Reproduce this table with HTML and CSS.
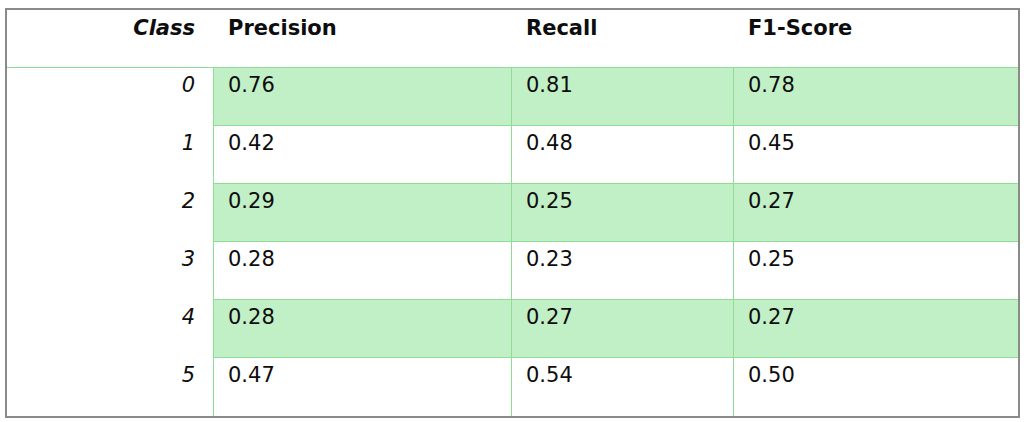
FILE: index.html
```html
<!DOCTYPE html>
<html lang="en">
<head>
<meta charset="utf-8">
<title>Classification report</title>
<link rel="stylesheet" href="styles.css">
</head>
<body>
<div class="page">
  <div class="report" role="table">
    <div class="cell head cls" role="columnheader">Class</div>
    <div class="cell head" role="columnheader">Precision</div>
    <div class="cell head" role="columnheader">Recall</div>
    <div class="cell head" role="columnheader">F1-Score</div>

    <div class="cell cls">0</div>
    <div class="cell num band">0.76</div>
    <div class="cell num band">0.81</div>
    <div class="cell num band">0.78</div>

    <div class="cell cls">1</div>
    <div class="cell num">0.42</div>
    <div class="cell num">0.48</div>
    <div class="cell num">0.45</div>

    <div class="cell cls">2</div>
    <div class="cell num band">0.29</div>
    <div class="cell num band">0.25</div>
    <div class="cell num band">0.27</div>

    <div class="cell cls">3</div>
    <div class="cell num">0.28</div>
    <div class="cell num">0.23</div>
    <div class="cell num">0.25</div>

    <div class="cell cls">4</div>
    <div class="cell num band">0.28</div>
    <div class="cell num band">0.27</div>
    <div class="cell num band">0.27</div>

    <div class="cell cls">5</div>
    <div class="cell num last">0.47</div>
    <div class="cell num last">0.54</div>
    <div class="cell num last">0.50</div>
  </div>
</div>
</body>
</html>
```

FILE: styles.css
```css
html, body {
  margin: 0;
  padding: 0;
  background: #ffffff;
}

.page {
  padding: 8px 0 0 5px;
}

.report {
  display: grid;
  grid-template-columns: 206px 298px 222px 285px;
  grid-auto-rows: 58px;
  width: max-content;
  border: 2px solid #8a8a8a;
  font-family: "DejaVu Sans", "Liberation Sans", sans-serif;
  font-size: 21px;
  line-height: 26px;
  color: #0d0d0d;
}

.cell {
  box-sizing: border-box;
  padding: 4px 14px 0 15px;
}

.head {
  font-weight: 700;
  padding-top: 5px;
  border-bottom: 1px solid #8fdc97;
}

.cls {
  font-style: italic;
  text-align: right;
  padding-right: 18px;
  padding-left: 0;
}

.num {
  border-left: 1px solid #8fdc97;
  border-bottom: 1px solid #8fdc97;
  padding-left: 14px;
}

.num.last {
  border-bottom: none;
}

.band {
  background: #c1efc6;
}
```
